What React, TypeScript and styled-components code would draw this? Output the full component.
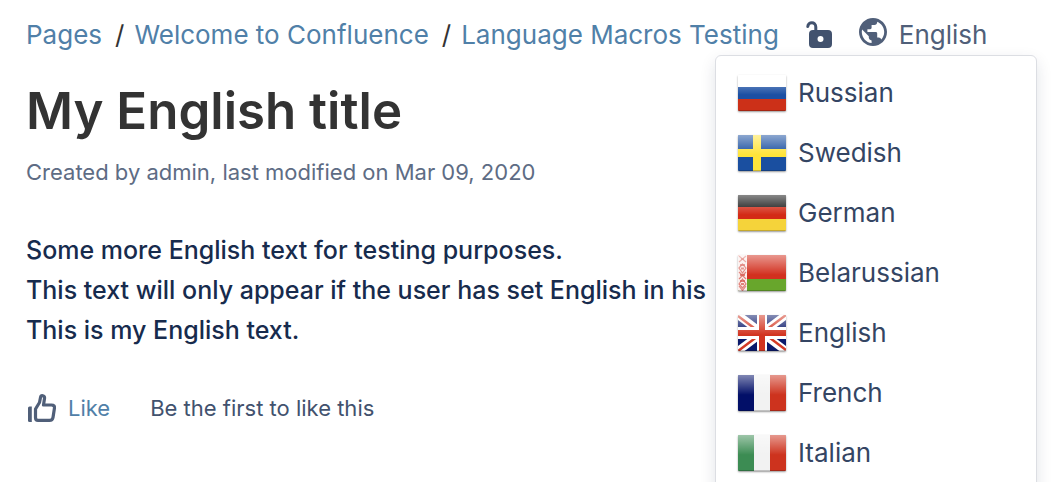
import React from 'react';
import styled, { createGlobalStyle } from 'styled-components';

const GlobalStyle = createGlobalStyle`
  * { box-sizing: border-box; }
  body {
    margin: 0;
    background: #fff;
    color: #172b4d;
    font-family: Inter, "Liberation Sans", sans-serif;
  }
`;

const Page = styled.div`
  min-height: 100vh;
  padding: 14px 26px 0;
  overflow: hidden;
`;

const TopBar = styled.header`
  position: relative;
  display: flex;
  align-items: center;
  height: 41px;
  font-size: 26px;
  line-height: 40px;
  white-space: nowrap;
`;

const Crumbs = styled.ol`
  display: flex;
  margin: 0;
  padding: 0;
  list-style: none;
`;

const Crumb = styled.li`
  & + &::before {
    content: '/';
    margin: 0 10px 0 13px;
    color: #333;
  }
`;

const TextLink = styled.a`
  color: #5080a8;
  text-decoration: none;
`;

const PlainButton = styled.button`
  display: flex;
  align-items: center;
  gap: 12px;
  padding: 0;
  border: 0;
  background: none;
  color: ${(p) => p.color};
  font: inherit;
  cursor: pointer;
`;

const LockButton = styled(PlainButton)`
  margin: 0 26px 0 27px;
`;

const Icon = styled.svg<{ $w: number; $h: number }>`
  display: block;
  flex: none;
  width: ${(p) => p.$w}px;
  height: ${(p) => p.$h}px;
`;

const Menu = styled.ul`
  position: absolute;
  top: 100%;
  right: -1px;
  z-index: 1;
  width: 322px;
  margin: 0;
  padding: 7px 0;
  list-style: none;
  background: #fff;
  border: 1px solid #dcdee3;
  border-radius: 6px;
  box-shadow: 0 6px 16px rgba(9, 30, 66, 0.12);
`;

const MenuLink = styled.a`
  display: flex;
  align-items: center;
  gap: 12px;
  height: 60px;
  padding: 0 22px;
  color: #344563;
  text-decoration: none;
`;

const FlagBox = styled.svg`
  display: block;
  flex: none;
  width: 48px;
  height: 36px;
  border-radius: 1px;
  box-shadow: 0 1px 2px rgba(0, 0, 0, 0.4);
`;

const Title = styled.h1`
  margin: 24px 0 0;
  color: #333;
  font-size: 51px;
  font-weight: 600;
  line-height: 64px;
`;

const Byline = styled.p`
  margin: 13px 0 0;
  color: #5e6c84;
  font-size: 22px;
  line-height: 32px;
`;

const Content = styled.main`
  margin-top: 42px;
  font-size: 25px;
  font-weight: 500;
  line-height: 40px;
  white-space: nowrap;
  p { margin: 0; }
`;

const Likes = styled.footer`
  display: flex;
  align-items: center;
  gap: 40px;
  margin-top: 42px;
  padding-left: 2px;
  color: #42526e;
  font-size: 22px;
  line-height: 32px;
`;

const flags: Record<string, React.ReactNode> = {
  Russian: (
    <>
      <path fill="#fff" d="M0 0h48v12H0z" />
      <path fill="#1b4fa3" d="M0 12h48v12H0z" />
      <path fill="#cc3018" d="M0 24h48v12H0z" />
    </>
  ),
  Swedish: (
    <>
      <path fill="#1a4fa0" d="M0 0h48v36H0z" />
      <path fill="#ffe43a" d="M15 0h8v36h-8zM0 14h48v8H0z" />
    </>
  ),
  German: (
    <>
      <path fill="#111" d="M0 0h48v12H0z" />
      <path fill="#d32a16" d="M0 12h48v12H0z" />
      <path fill="#f5d33a" d="M0 24h48v12H0z" />
    </>
  ),
  Belarussian: (
    <>
      <path fill="#d2301f" d="M0 0h48v24H0z" />
      <path fill="#68a62c" d="M0 24h48v12H0z" />
      <path fill="#fbeeec" d="M0 0h9v36H0z" />
      <g fill="none" stroke="#d6564b" strokeOpacity="0.7" strokeWidth="1.2">
        <path d="M1 1l7 6M8 1L1 7M1 13l3.500-4L8 13l-3.500 5zM1 17l7 7M8 17l-7 7M1 29l3.500-5L8 29l-3.500 4zM1 31l4 5M8 31l-4 5" />
        <path strokeWidth="2" d="M2 10h5M3 13.500h3M2 20h5M2 26h5M3 29h3M3 4h3" />
      </g>
    </>
  ),
  English: (
    <>
      <path fill="#0b1a6b" d="M0 0h48v36H0z" />
      <path stroke="#fff" strokeWidth="8" d="M0 0l48 36M48 0L0 36" />
      <path stroke="#d33a26" strokeWidth="2.500" d="M0 1l20 15M28 20l20 15M48 0L28 15M20 21L0 36" />
      <path fill="#fff" d="M19 0h10v36H19zM0 12h48v12H0z" />
      <path fill="#d23420" d="M21 0h6v36h-6zM0 15h48v6H0z" />
    </>
  ),
  French: (
    <>
      <path fill="#020f68" d="M0 0h16v36H0z" />
      <path fill="#f2f2f2" d="M16 0h16v36H16z" />
      <path fill="#cd331e" d="M32 0h16v36H32z" />
    </>
  ),
  Italian: (
    <>
      <path fill="#3c8c53" d="M0 0h16v36H0z" />
      <path fill="#f2f2f2" d="M16 0h16v36H16z" />
      <path fill="#cd331e" d="M32 0h16v36H32z" />
    </>
  ),
};

function Flag({ name }: { name: string }) {
  const gloss = `gloss-${name}`;
  return (
    <FlagBox viewBox="0 0 48 36" aria-hidden="true">
      <defs>
        <linearGradient id={gloss} x1="0" y1="0" x2="0" y2="1">
          <stop offset="0" stopColor="#fff" stopOpacity="0.5" />
          <stop offset="0.5" stopColor="#fff" stopOpacity="0.05" />
          <stop offset="0.55" stopColor="#fff" stopOpacity="0" />
        </linearGradient>
      </defs>
      {flags[name]}
      <rect width="48" height="36" fill={`url(#${gloss})`} />
      <path d="M0 35.500h48" stroke="#000" strokeOpacity="0.2" />
    </FlagBox>
  );
}

export default function App() {
  return (
    <>
      <GlobalStyle />
      <Page>
        <TopBar>
          <nav aria-label="Breadcrumb">
            <Crumbs>
              {['Pages', 'Welcome to Confluence', 'Language Macros Testing'].map((label) => (
                <Crumb key={label}>
                  <TextLink href="#">{label}</TextLink>
                </Crumb>
              ))}
            </Crumbs>
          </nav>
          <LockButton color="#42526e" aria-label="Restrictions">
            <Icon $w={27} $h={28} viewBox="0 0 27 28">
              <path fill="none" stroke="currentColor" strokeWidth="3" strokeLinecap="round" d="M1.800 5.500C2 .6 9.800 .2 9.800 6V10" />
              <path
                fill="currentColor"
                fillRule="evenodd"
                d="M7 9h15a4 4 0 0 1 4 4V23a4 4 0 0 1-4 4H7a4 4 0 0 1-4-4V13a4 4 0 0 1 4-4zm7.500 6a3 3 0 1 0 0 6 3 3 0 0 0 0-6z"
              />
            </Icon>
          </LockButton>
          <PlainButton color="#505f79" aria-haspopup="true" aria-expanded="true">
            <Icon $w={28} $h={34} viewBox="0 0 28 34">
              <path
                fill="currentColor"
                transform="scale(1.4) translate(-2 -2)"
                d="M12 2C6.480 2 2 6.480 2 12s4.480 10 10 10 10-4.480 10-10S17.520 2 12 2zm-1 17.930c-3.950-.49-7-3.850-7-7.930 0-.62.08-1.210.21-1.790L9 15v1c0 1.100.9 2 2 2v1.930zm6.900-2.540c-.26-.81-1-1.390-1.900-1.390h-1v-3c0-.55-.45-1-1-1H8v-2h2c.55 0 1-.45 1-1V7h2c1.100 0 2-.9 2-2v-.41c2.930 1.190 5 4.060 5 7.410 0 2.080-.8 3.970-2.100 5.390z"
              />
            </Icon>
            English
          </PlainButton>
          <Menu>
            {Object.keys(flags).map((name) => (
              <li key={name}>
                <MenuLink href="#">
                  <Flag name={name} />
                  {name}
                </MenuLink>
              </li>
            ))}
          </Menu>
        </TopBar>
        <Title>My English title</Title>
        <Byline>Created by admin, last modified on Mar 09, 2020</Byline>
        <Content>
          <p>Some more English text for testing purposes.</p>
          <p>This text will only appear if the user has set English in his</p>
          <p>This is my English text.</p>
        </Content>
        <Likes>
          <PlainButton color="#5080a8">
            <Icon $w={28} $h={28} viewBox="0 0 28 28">
              <path fill="none" stroke="#505f79" strokeWidth="3.200" strokeLinejoin="round" d="M7.500 15L11.500 8.500 12.500 3.500C13 .8 17 1.200 16.500 4.500L15.500 11H23.500Q27 11 26.400 14.500L25 23.500Q24.500 26.400 21.500 26.400H10Q7.500 26.400 7.500 23.500Z" />
              <path fill="#505f79" d="M3.800 12.500V28H1.500Q0 28 0 26.500V14Q0 12.500 1.500 12.500Z" />
            </Icon>
            Like
          </PlainButton>
          <span>Be the first to like this</span>
        </Likes>
      </Page>
    </>
  );
}
